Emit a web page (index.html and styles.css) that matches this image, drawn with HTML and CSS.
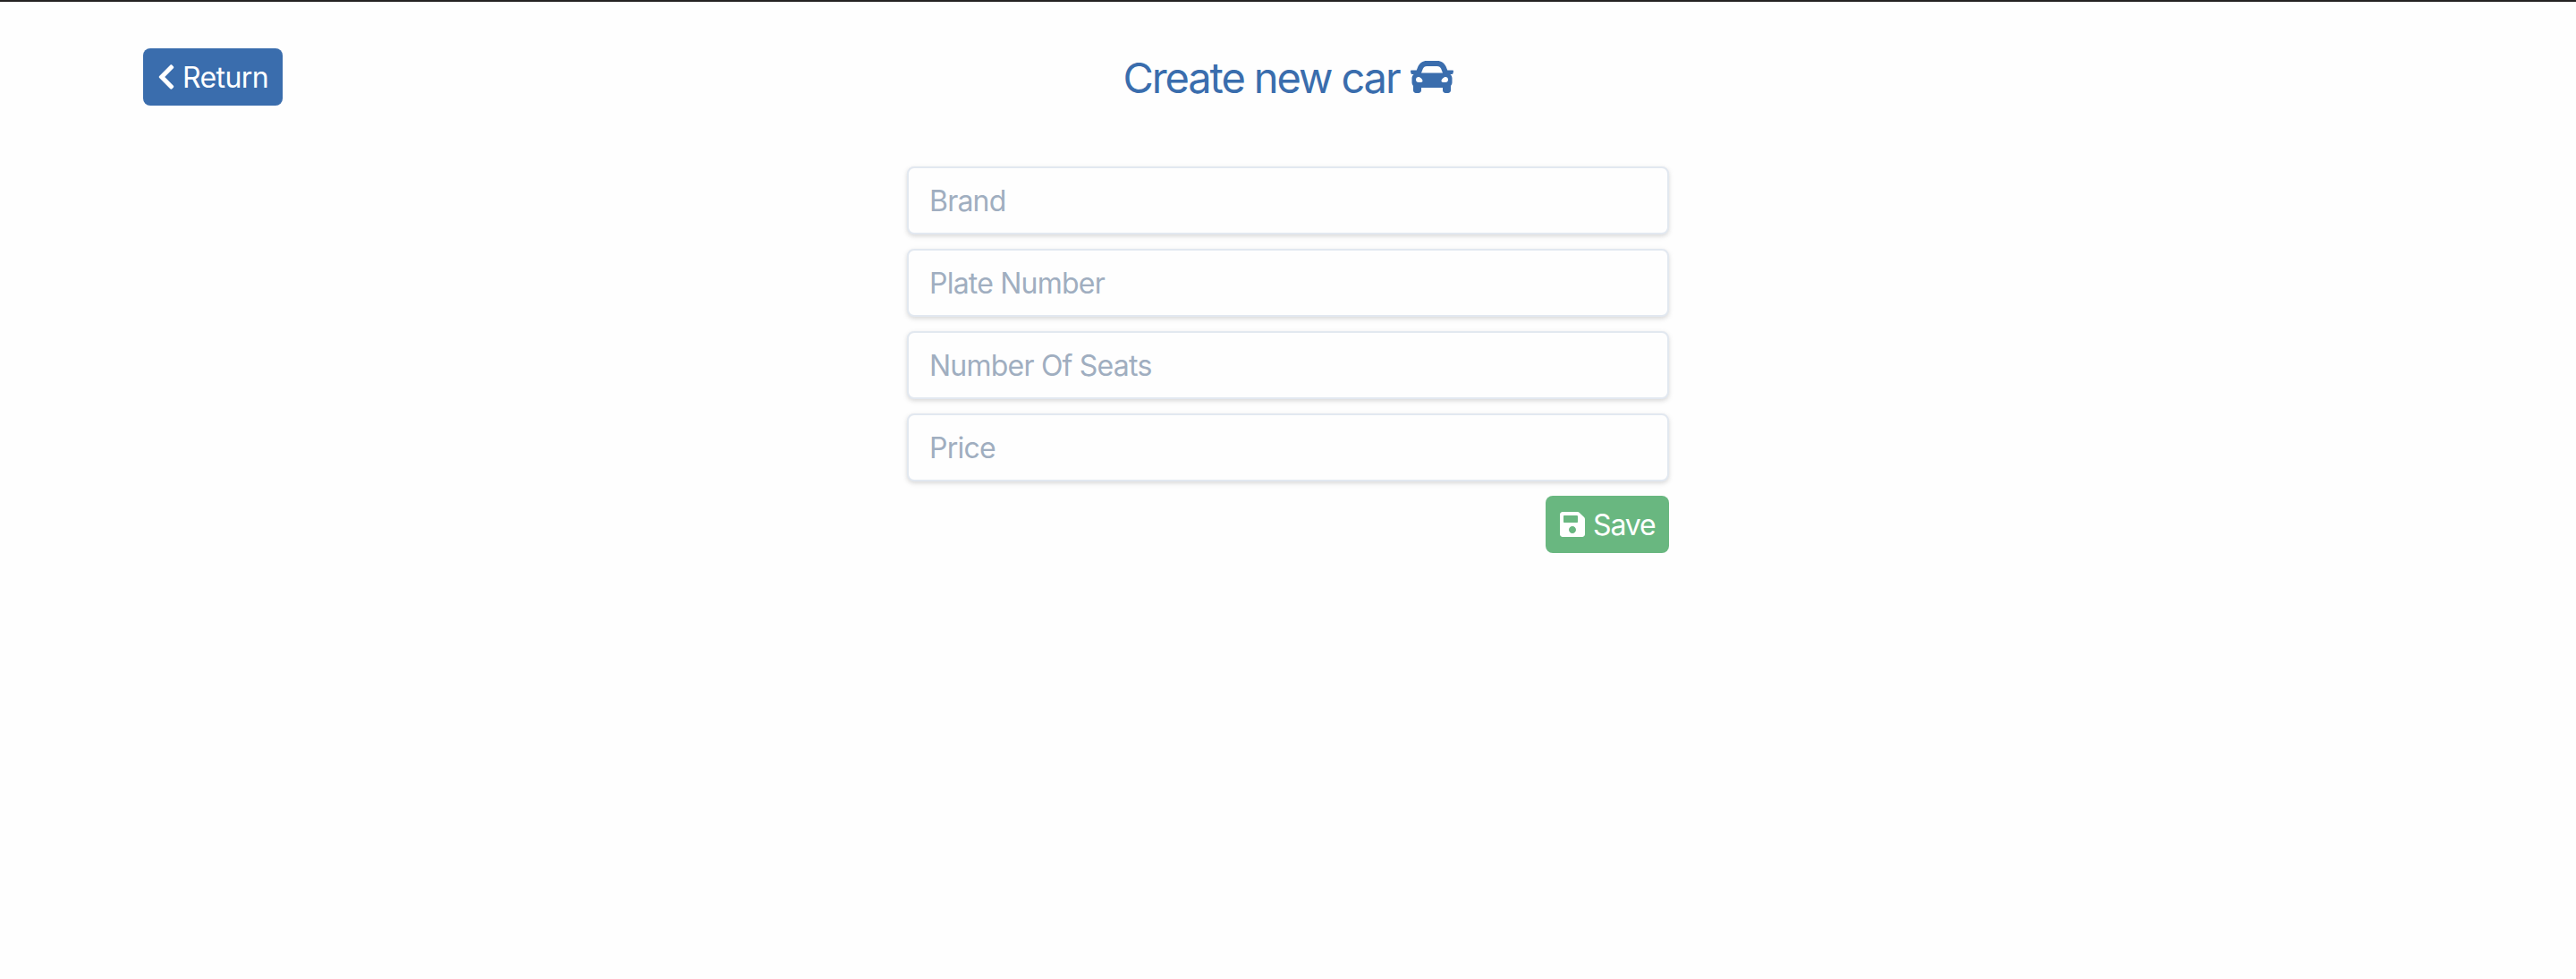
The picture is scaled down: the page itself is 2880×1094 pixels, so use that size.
FILE: index.html
```html
<!DOCTYPE html>
<html lang="en">
<head>
<meta charset="utf-8">
<title>Create new car</title>
<link rel="stylesheet" href="styles.css">
</head>
<body>
<main class="page">
  <header class="header">
    <a class="button button-return" href="#"><svg class="icon icon-chevron" viewBox="0 0 320 512" aria-hidden="true"><path d="M34.52 239.03L228.87 44.69c9.37-9.37 24.57-9.37 33.94 0l22.67 22.67c9.36 9.36 9.37 24.52.04 33.9L131.49 256l154.02 154.75c9.34 9.38 9.32 24.54-.04 33.9l-22.67 22.67c-9.37 9.37-24.57 9.37-33.94 0L34.52 272.97c-9.37-9.37-9.37-24.57 0-33.94z"/></svg><span class="return-label">Return</span></a>
    <h1 class="title"><span class="title-label">Create new car</span><svg class="icon icon-car" viewBox="0 0 512 512" aria-hidden="true"><path d="M499.99 176h-59.87l-16.64-41.6C406.38 91.63 365.57 64 319.5 64h-127c-46.06 0-86.88 27.63-103.99 70.4L71.87 176H12.01C4.2 176-1.53 183.34.37 190.91l6 24C7.7 220.25 12.5 224 18.01 224h20.07C24.65 235.73 16 252.78 16 272v48c0 16.12 6.16 30.67 16 41.93V416c0 17.67 14.33 32 32 32h32c17.67 0 32-14.33 32-32v-32h256v32c0 17.67 14.33 32 32 32h32c17.67 0 32-14.33 32-32v-54.07c9.84-11.25 16-25.8 16-41.93v-48c0-19.22-8.65-36.27-22.07-48H494c5.51 0 10.31-3.75 11.64-9.09l6-24c1.89-7.57-3.84-14.91-11.65-14.91zm-352.06-17.83c7.29-18.22 24.94-30.17 44.57-30.17h127c19.63 0 37.28 11.95 44.57 30.17L384 208H128l19.93-49.83zM96 319.8c-19.2 0-32-12.76-32-31.9S76.8 256 96 256s48 28.71 48 47.85-28.8 15.95-48 15.95zm320 0c-19.2 0-48 3.19-48-15.95S396.8 256 416 256s32 12.76 32 31.9-12.8 31.9-32 31.9z"/></svg></h1>
  </header>
  <form class="form">
    <input class="field field-brand" type="text" placeholder="Brand" aria-label="Brand">
    <input class="field field-plate" type="text" placeholder="Plate Number" aria-label="Plate Number">
    <input class="field field-seats" type="text" placeholder="Number Of Seats" aria-label="Number Of Seats">
    <input class="field field-price" type="text" placeholder="Price" aria-label="Price">
    <button class="button button-save" type="button"><svg class="icon icon-save" viewBox="0 0 448 512" aria-hidden="true"><path d="M433.941 129.941l-83.882-83.882A48 48 0 0 0 316.118 32H48C21.49 32 0 53.49 0 80v352c0 26.51 21.49 48 48 48h352c26.51 0 48-21.49 48-48V163.882a48 48 0 0 0-14.059-33.941zM224 416c-35.346 0-64-28.654-64-64 0-35.346 28.654-64 64-64s64 28.654 64 64c0 35.346-28.654 64-64 64zm96-304.52V212c0 6.627-5.373 12-12 12H76c-6.627 0-12-5.373-12-12V108c0-6.627 5.373-12 12-12h228.52c3.183 0 6.235 1.264 8.485 3.515l3.48 3.48A11.996 11.996 0 0 1 320 111.48z"/></svg><span class="save-label">Save</span></button>
  </form>
</main>
</body>
</html>
```
FILE: styles.css
```css
* {
  box-sizing: border-box;
}

body {
  margin: 0;
  background: #fefefe;
  font-family: Inter, "Liberation Sans", sans-serif;
  font-size: 32px;
  font-weight: 420;
}

.page {
  min-height: 1094px;
  border-top: 2px solid #242222;
  padding: 48px 160px 0;
}

.header {
  display: grid;
  grid-template-columns: 1fr auto 1fr;
  grid-template-rows: 72px;
  align-items: center;
}

.icon {
  display: block;
  flex: none;
  fill: currentColor;
}

.button {
  display: flex;
  align-items: center;
  height: 64px;
  padding: 0 16px;
  border: 0;
  border-radius: 8px;
  color: #fff;
  font: inherit;
  line-height: 48px;
  text-decoration: none;
  white-space: nowrap;
}

.button-return {
  justify-self: start;
  width: 156px;
  gap: 8px;
  background: #3a6dad;
}

.icon-chevron {
  width: 20px;
  height: 32px;
}

.return-label {
  padding-top: 2px;
  letter-spacing: -0.6px;
}

.title {
  display: flex;
  align-items: center;
  gap: 12px;
  height: 72px;
  margin: 0;
  color: #3a6dad;
  font-size: 47px;
  font-weight: 420;
  line-height: 72px;
}

.title-label {
  padding-top: 2px;
  letter-spacing: -2.1px;
}

.icon-car {
  width: 48px;
  height: 48px;
}

.form {
  display: flex;
  flex-direction: column;
  gap: 16px;
  width: 852px;
  margin: 64px auto 0;
}

.field {
  width: 100%;
  height: 76px;
  padding: 0 23px;
  border: 2px solid #e2e8f0;
  border-radius: 8px;
  background: #fefefe;
  box-shadow: 0 2px 6px rgba(0, 0, 0, 0.1), 0 2px 4px rgba(0, 0, 0, 0.06);
  font: inherit;
  letter-spacing: -0.78px;
}

.field::placeholder {
  color: #a0aec0;
  opacity: 1;
}

.button-save {
  align-self: flex-end;
  width: 138px;
  gap: 9px;
  background: #69b780;
}

.icon-save {
  width: 28px;
  height: 32px;
}

.save-label {
  padding-top: 2px;
  letter-spacing: -1.1px;
}
```
